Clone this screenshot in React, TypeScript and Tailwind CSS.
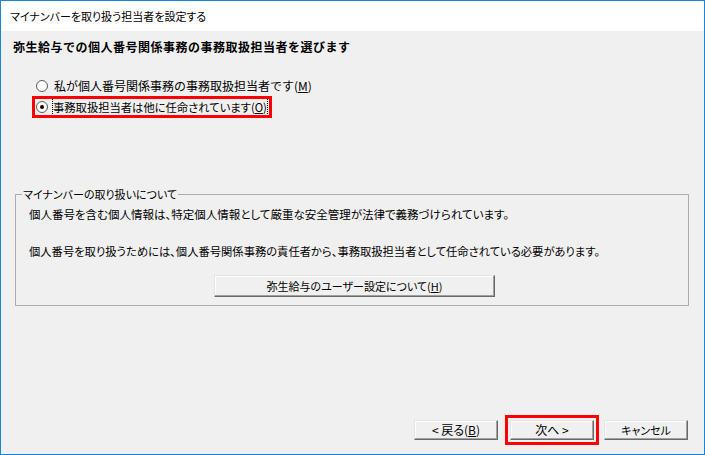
const jp = "font-['Noto_Sans_CJK_JP','Noto_Sans',sans-serif]"

function Radio({ checked }: { checked?: boolean }) {
  return (
    <span className="flex h-[12px] w-[12px] shrink-0 items-center justify-center rounded-full border border-[#5a5a5a] bg-white">
      {checked && <span className="h-[4px] w-[4px] rounded-full bg-black" />}
    </span>
  )
}

function Btn({ children, className = '' }: { children: React.ReactNode; className?: string }) {
  return (
    <button
      className={`flex items-center justify-center whitespace-nowrap border border-t-[#e3e3e3] border-l-[#e3e3e3] border-r-[#696969] border-b-[#696969] bg-[#f0f0f0] leading-none text-black shadow-[inset_-1px_-1px_0_#a0a0a0,inset_1px_1px_0_#ffffff] [font-feature-settings:'palt'] ${className}`}
    >
      {children}
    </button>
  )
}

export default function App() {
  return (
    <div className={`flex h-[455px] w-[705px] flex-col border border-[#1883d7] bg-white text-black ${jp}`}>
      {/* title bar */}
      <div className="flex h-[30px] shrink-0 items-center bg-white pl-[9px] text-[11px] [font-feature-settings:'palt']">
        マイナンバーを取り扱う担当者を設定する
      </div>

      <div className="flex flex-1 flex-col bg-[#f0f0f0] pt-[8px]">
        <h1 className="ml-[12px] whitespace-nowrap text-[12px] font-bold leading-[16px] tracking-[0.5px]">
          弥生給与での個人番号関係事務の事務取扱担当者を選びます
        </h1>

        <div className="ml-[34px] mt-[23px] flex h-[16px] items-center gap-[6px] whitespace-nowrap pl-[1px] text-[12px] leading-[16px]">
          <Radio />
          <span>
            私が個人番号関係事務の事務取扱担当者です(<u>M</u>)
          </span>
        </div>

        <div className="ml-[34px] mt-[5px] flex h-[16px] w-fit items-center gap-[5px] whitespace-nowrap pl-[1px] pr-[2px] text-[11.3px] leading-[16px] outline outline-[3px] outline-[#ff0000]">
          <Radio checked />
          <span className="outline outline-1 outline-dotted outline-black [font-feature-settings:'palt']">
            事務取扱担当者は他に任命されています(<u>O</u>)
          </span>
        </div>

        <fieldset className="ml-[14px] mt-[71px] w-[674px] border border-[#adadad] pb-[8px] pl-[13px] pr-[8px]">
          <legend className="-ml-[7px] px-[1px] text-[11px] leading-[16px] [font-feature-settings:'palt']">
            マイナンバーの取り扱いについて
          </legend>
          <p className="mt-[4px] whitespace-nowrap text-[11.5px] leading-[16px] [font-feature-settings:'palt']">
            個人番号を含む個人情報は、特定個人情報として厳重な安全管理が法律で義務づけられています。
          </p>
          <p className="mt-[21px] whitespace-nowrap text-[11.3px] leading-[16px] [font-feature-settings:'palt']">
            個人番号を取り扱うためには、個人番号関係事務の責任者から、事務取扱担当者として任命されている必要があります。
          </p>
          <Btn className="mx-auto mt-[16px] h-[22px] w-[281px] text-[11px]">
            弥生給与のユーザー設定について(<u>H</u>)
          </Btn>
        </fieldset>

        <div className="mt-auto mb-[14px] mr-[16px] flex justify-end">
          <Btn className="h-[20px] w-[84px] text-[12px]">
            &lt; 戻る(<u>B</u>)
          </Btn>
          <Btn className="ml-[12px] h-[20px] w-[84px] text-[12px] outline outline-[3px] outline-offset-[2px] outline-[#ff0000]">
            次へ &gt;
          </Btn>
          <Btn className="ml-[10px] h-[20px] w-[84px] text-[11px]">キャンセル</Btn>
        </div>
      </div>
    </div>
  )
}
